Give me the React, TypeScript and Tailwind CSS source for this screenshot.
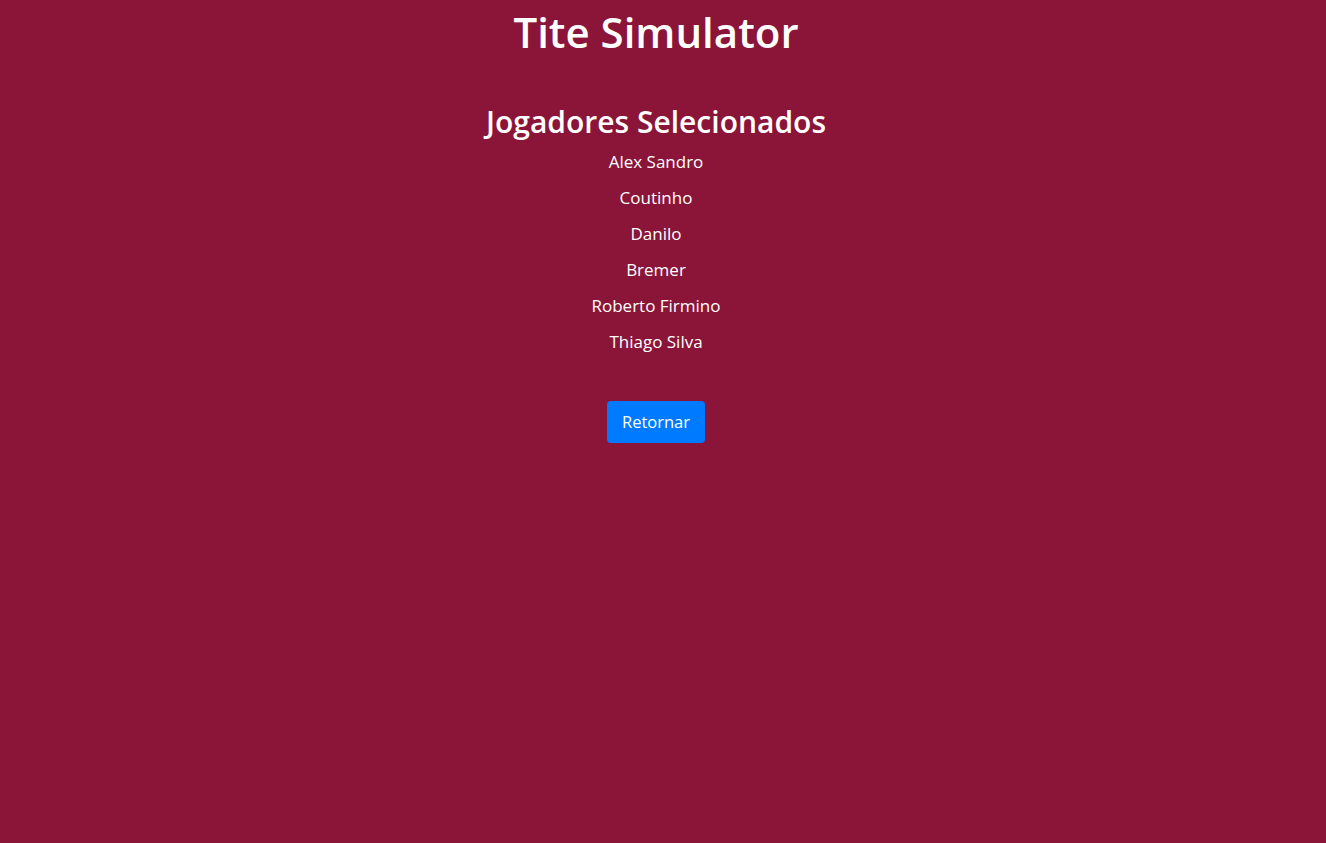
import React from "react";

const players = [
  "Alex Sandro",
  "Coutinho",
  "Danilo",
  "Bremer",
  "Roberto Firmino",
  "Thiago Silva",
];

export default function App() {
  return (
    <div className="min-h-screen bg-[#8a1538] text-white font-['Open_Sans',sans-serif]">
      <div className="w-[1312px] text-center">
        <h1 className="text-[42px] font-semibold leading-[1.2] pt-[7px] m-0">Tite Simulator</h1>

        <section className="mt-[47px]">
          <h2 className="text-[30px] font-semibold leading-[1.2] mb-[10px]">Jogadores Selecionados</h2>
          <ul>
            {players.map((p) => (
              <li key={p} className="text-[17px] leading-[24px] mb-[12px]">
                {p}
              </li>
            ))}
          </ul>
          <button className="mt-[35px] bg-[#007bff] text-white text-[16.5px] px-[15px] h-[42px] rounded-[4px]">
            Retornar
          </button>
        </section>
      </div>
    </div>
  );
}
